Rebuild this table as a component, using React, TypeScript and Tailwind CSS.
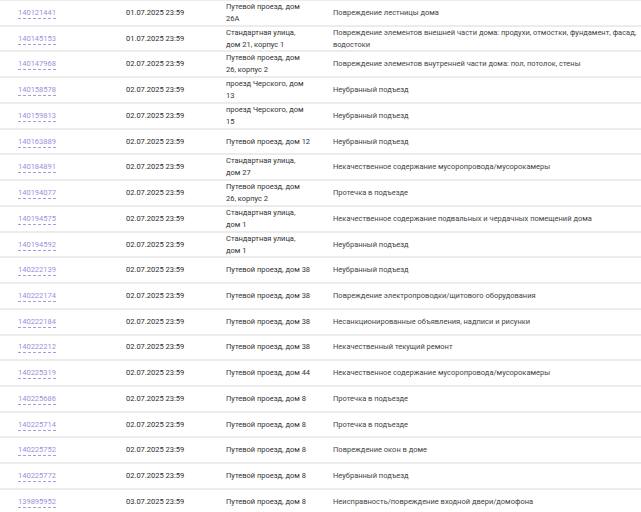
import React from "react"

// Appeals list: id, deadline, address lines, description lines
const rows = [
  { id: "140121441", date: "01.07.2025 23:59", addr: ["Путевой проезд, дом", "26А"], desc: ["Повреждение лестницы дома"] },
  { id: "140145153", date: "01.07.2025 23:59", addr: ["Стандартная улица,", "дом 21, корпус 1"], desc: ["Повреждение элементов внешней части дома: продухи, отмостки, фундамент, фасад,", "водостоки"] },
  { id: "140147968", date: "02.07.2025 23:59", addr: ["Путевой проезд, дом", "26, корпус 2"], desc: ["Повреждение элементов внутренней части дома: пол, потолок, стены"] },
  { id: "140158578", date: "02.07.2025 23:59", addr: ["проезд Черского, дом", "13"], desc: ["Неубранный подъезд"] },
  { id: "140159813", date: "02.07.2025 23:59", addr: ["проезд Черского, дом", "15"], desc: ["Неубранный подъезд"] },
  { id: "140163889", date: "02.07.2025 23:59", addr: ["Путевой проезд, дом 12"], desc: ["Неубранный подъезд"] },
  { id: "140184891", date: "02.07.2025 23:59", addr: ["Стандартная улица,", "дом 27"], desc: ["Некачественное содержание мусоропровода/мусорокамеры"] },
  { id: "140194077", date: "02.07.2025 23:59", addr: ["Путевой проезд, дом", "26, корпус 2"], desc: ["Протечка в подъезде"] },
  { id: "140194575", date: "02.07.2025 23:59", addr: ["Стандартная улица,", "дом 1"], desc: ["Некачественное содержание подвальных и чердачных помещений дома"] },
  { id: "140194592", date: "02.07.2025 23:59", addr: ["Стандартная улица,", "дом 1"], desc: ["Неубранный подъезд"] },
  { id: "140222139", date: "02.07.2025 23:59", addr: ["Путевой проезд, дом 38"], desc: ["Неубранный подъезд"] },
  { id: "140222174", date: "02.07.2025 23:59", addr: ["Путевой проезд, дом 38"], desc: ["Повреждение электропроводки/щитового оборудования"] },
  { id: "140222184", date: "02.07.2025 23:59", addr: ["Путевой проезд, дом 38"], desc: ["Несанкционированные объявления, надписи и рисунки"] },
  { id: "140222212", date: "02.07.2025 23:59", addr: ["Путевой проезд, дом 38"], desc: ["Некачественный текущий ремонт"] },
  { id: "140225319", date: "02.07.2025 23:59", addr: ["Путевой проезд, дом 44"], desc: ["Некачественное содержание мусоропровода/мусорокамеры"] },
  { id: "140225686", date: "02.07.2025 23:59", addr: ["Путевой проезд, дом 8"], desc: ["Протечка в подъезде"] },
  { id: "140225714", date: "02.07.2025 23:59", addr: ["Путевой проезд, дом 8"], desc: ["Протечка в подъезде"] },
  { id: "140225752", date: "02.07.2025 23:59", addr: ["Путевой проезд, дом 8"], desc: ["Повреждение окон в доме"] },
  { id: "140225772", date: "02.07.2025 23:59", addr: ["Путевой проезд, дом 8"], desc: ["Неубранный подъезд"] },
  { id: "139895952", date: "03.07.2025 23:59", addr: ["Путевой проезд, дом 8"], desc: ["Неисправность/повреждение входной двери/домофона"] },
]

export default function App() {
  return (
    <div className="w-[641px] h-[512px] overflow-hidden bg-white font-['Roboto',sans-serif] text-[7.5px] leading-[12px] text-[#333]">
      <div className="border-t border-[#ececec]">
        {rows.map((r) => (
          <div
            key={r.id}
            className="grid grid-cols-[126px_100px_107px_1fr] items-center h-[25.74px] border-b-2 border-[#ececec]"
          >
            <div className="pl-[18px]">
              <span className="text-[#9d90dd] border-b border-dashed border-[#a89be6] pb-[1px]">{r.id}</span>
            </div>
            <div className="text-[#2a2a2a]">{r.date}</div>
            <div className="text-[#333]">
              {r.addr.map((l, i) => (
                <div key={i}>{l}</div>
              ))}
            </div>
            <div className="text-[#444]">
              {r.desc.map((l, i) => (
                <div key={i} className="whitespace-nowrap">{l}</div>
              ))}
            </div>
          </div>
        ))}
      </div>
    </div>
  )
}
